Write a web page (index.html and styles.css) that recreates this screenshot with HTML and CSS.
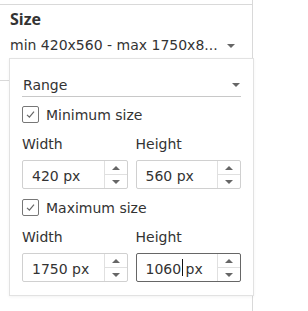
FILE: index.html
```html
<!DOCTYPE html>
<html lang="en">
<head>
    <meta charset="UTF-8">
    <title>Size</title>
    <link rel="stylesheet" href="styles.css">
</head>
<body>
    <div class="panel">
        <div class="section">
            <h2>Size</h2>
            <div class="summary">
                <span>min 420x560 - max 1750x8...</span>
                <span class="arrow down"></span>
            </div>
        </div>

        <div class="popup">
            <div class="select">
                <span>Range</span>
                <span class="arrow down"></span>
            </div>

            <label class="check">
                <span class="box">
                    <svg width="11" height="11" viewBox="0 0 11 11"><path d="M2 5.8 L4.4 8.2 L9 2.6" fill="none" stroke="#666" stroke-width="1.2"/></svg>
                </span>
                Minimum size
            </label>
            <div class="pair">
                <div class="field">
                    <div class="field-label">Width</div>
                    <div class="spin">
                        <div class="value">420 px</div>
                        <div class="buttons"><span><i class="arrow up"></i></span><span><i class="arrow down"></i></span></div>
                    </div>
                </div>
                <div class="field">
                    <div class="field-label">Height</div>
                    <div class="spin">
                        <div class="value">560 px</div>
                        <div class="buttons"><span><i class="arrow up"></i></span><span><i class="arrow down"></i></span></div>
                    </div>
                </div>
            </div>

            <label class="check">
                <span class="box">
                    <svg width="11" height="11" viewBox="0 0 11 11"><path d="M2 5.8 L4.4 8.2 L9 2.6" fill="none" stroke="#666" stroke-width="1.2"/></svg>
                </span>
                Maximum size
            </label>
            <div class="pair">
                <div class="field">
                    <div class="field-label">Width</div>
                    <div class="spin">
                        <div class="value">1750 px</div>
                        <div class="buttons"><span><i class="arrow up"></i></span><span><i class="arrow down"></i></span></div>
                    </div>
                </div>
                <div class="field">
                    <div class="field-label">Height</div>
                    <div class="spin focused">
                        <div class="value">1060<span class="caret"></span>&nbsp;px</div>
                        <div class="buttons"><span><i class="arrow up"></i></span><span><i class="arrow down"></i></span></div>
                    </div>
                </div>
            </div>
        </div>
    </div>
</body>
</html>
```

FILE: styles.css
```css
body {
    margin: 0;
    background-color: white;
    font-family: "DejaVu Sans", Verdana, sans-serif;
    color: #333;
}
.panel {
    position: relative;
    width: 252px;
    height: 307px;
    padding-top: 4px;
    border-right: 1px solid #d9d9d9;
}
.section {
    border-top: 1px solid #d9d9d9;
    border-bottom: 1px solid #d9d9d9;
    height: 75px;
    padding: 0 0 0 10px;
}
h2 {
    margin: 3px 0 0 0;
    font-family: "Open Sans", Arial, sans-serif;
    font-size: 16px;
    font-weight: bold;
    line-height: 22px;
    color: #333;
}
.summary {
    display: flex;
    align-items: center;
    margin-top: 5px;
    font-size: 14px;
    line-height: 20px;
}
.summary .arrow {
    margin-left: 9px;
    margin-top: 1px;
}
.arrow {
    display: inline-block;
    width: 0;
    height: 0;
    border-left: 4px solid transparent;
    border-right: 4px solid transparent;
}
.arrow.down {
    border-top: 4px solid #666;
}
.arrow.up {
    border-bottom: 4px solid #666;
}
.popup {
    position: absolute;
    left: 9px;
    top: 58px;
    width: 219px;
    padding: 12px 12px 13px 12px;
    background-color: white;
    border: 1px solid #e2e2e2;
    box-shadow: 0 1px 3px rgba(0, 0, 0, 0.05);
}
.select {
    display: flex;
    justify-content: space-between;
    align-items: center;
    height: 23px;
    padding: 2px 1px 0 1px;
    border-bottom: 1px solid #c8c8c8;
    font-size: 14px;
}
.check {
    display: flex;
    align-items: center;
    margin-top: 9px;
    height: 17px;
    font-size: 14px;
}
.box {
    display: flex;
    align-items: center;
    justify-content: center;
    width: 15px;
    height: 15px;
    margin-right: 7px;
    border: 1px solid #777;
    border-radius: 2px;
}
.pair {
    display: flex;
    gap: 8px;
    margin-top: 11px;
}
.field {
    flex: 1;
}
.field-label {
    font-size: 14px;
    line-height: 20px;
    margin-bottom: 6px;
}
.spin {
    display: flex;
    height: 27px;
    border: 1px solid #d0d0d0;
    border-radius: 2px;
}
.spin.focused {
    border-color: #666;
}
.value {
    flex: 1;
    display: flex;
    align-items: center;
    padding: 2px 0 0 9px;
    font-size: 14px;
}
.caret {
    display: inline-block;
    width: 1px;
    height: 17px;
    margin: -2px -2px 0 1px;
    background-color: #111;
}
.buttons {
    display: flex;
    flex-direction: column;
    width: 22px;
    border-left: 1px solid #e0e0e0;
}
.buttons span {
    flex: 1;
    display: flex;
    align-items: center;
    justify-content: center;
}
.buttons span + span {
    border-top: 1px solid #e0e0e0;
}
.pair + .check {
    margin-top: 10px;
}
```
